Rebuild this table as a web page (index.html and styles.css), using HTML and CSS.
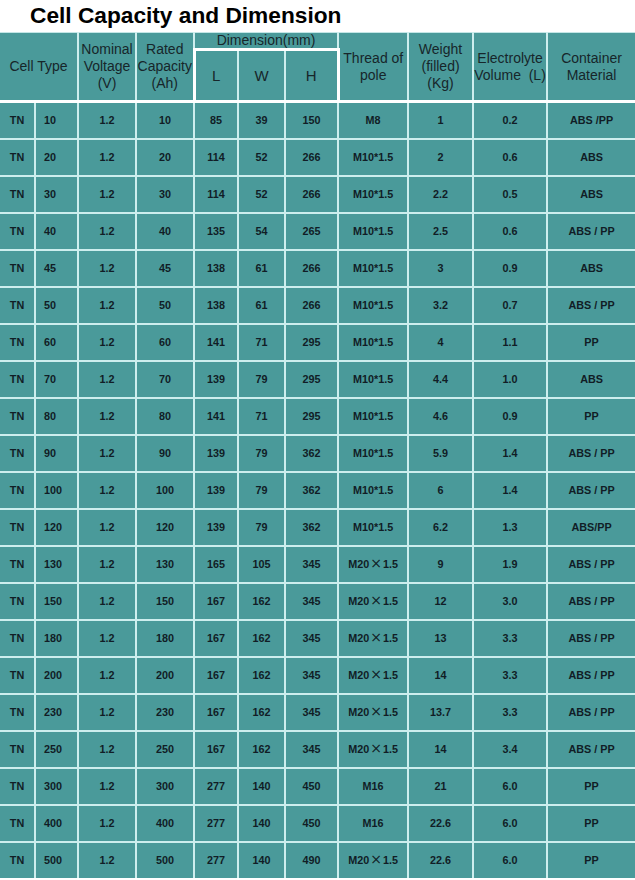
FILE: index.html
```html
<!DOCTYPE html>
<html>
<head>
<meta charset="utf-8">
<link rel="stylesheet" href="styles.css">
</head>
<body>
<h1 class="title">Cell Capacity and Dimension</h1>
<table class="spec">
  <colgroup>
    <col class="c-tn"><col class="c-num"><col class="c-volt"><col class="c-cap">
    <col class="c-l"><col class="c-w"><col class="c-h"><col class="c-thread">
    <col class="c-weight"><col class="c-elec"><col class="c-mat">
  </colgroup>
  <thead>
    <tr class="hr1">
      <th colspan="2" rowspan="2">Cell Type</th>
      <th rowspan="2">Nominal<br>Voltage<br>(V)</th>
      <th rowspan="2">Rated<br>Capacity<br>(Ah)</th>
      <th colspan="3" class="dim">Dimension(mm)</th>
      <th rowspan="2">Thread of<br>pole</th>
      <th rowspan="2">Weight<br>(filled)<br>(Kg)</th>
      <th rowspan="2" class="nowrap">Electrolyte<br>Volume&nbsp;&nbsp;(L)</th>
      <th rowspan="2">Container<br>Material</th>
    </tr>
    <tr class="hr2">
      <th class="sub first">L</th>
      <th class="sub">W</th>
      <th class="sub last">H</th>
    </tr>
  </thead>
  <tbody>
    <tr><td>TN</td><td class="num">10</td><td>1.2</td><td>10</td><td>85</td><td>39</td><td>150</td><td>M8</td><td>1</td><td>0.2</td><td>ABS /PP</td></tr>
    <tr><td>TN</td><td class="num">20</td><td>1.2</td><td>20</td><td>114</td><td>52</td><td>266</td><td>M10*1.5</td><td>2</td><td>0.6</td><td>ABS</td></tr>
    <tr><td>TN</td><td class="num">30</td><td>1.2</td><td>30</td><td>114</td><td>52</td><td>266</td><td>M10*1.5</td><td>2.2</td><td>0.5</td><td>ABS</td></tr>
    <tr><td>TN</td><td class="num">40</td><td>1.2</td><td>40</td><td>135</td><td>54</td><td>265</td><td>M10*1.5</td><td>2.5</td><td>0.6</td><td>ABS / PP</td></tr>
    <tr><td>TN</td><td class="num">45</td><td>1.2</td><td>45</td><td>138</td><td>61</td><td>266</td><td>M10*1.5</td><td>3</td><td>0.9</td><td>ABS</td></tr>
    <tr><td>TN</td><td class="num">50</td><td>1.2</td><td>50</td><td>138</td><td>61</td><td>266</td><td>M10*1.5</td><td>3.2</td><td>0.7</td><td>ABS / PP</td></tr>
    <tr><td>TN</td><td class="num">60</td><td>1.2</td><td>60</td><td>141</td><td>71</td><td>295</td><td>M10*1.5</td><td>4</td><td>1.1</td><td>PP</td></tr>
    <tr><td>TN</td><td class="num">70</td><td>1.2</td><td>70</td><td>139</td><td>79</td><td>295</td><td>M10*1.5</td><td>4.4</td><td>1.0</td><td>ABS</td></tr>
    <tr><td>TN</td><td class="num">80</td><td>1.2</td><td>80</td><td>141</td><td>71</td><td>295</td><td>M10*1.5</td><td>4.6</td><td>0.9</td><td>PP</td></tr>
    <tr><td>TN</td><td class="num">90</td><td>1.2</td><td>90</td><td>139</td><td>79</td><td>362</td><td>M10*1.5</td><td>5.9</td><td>1.4</td><td>ABS / PP</td></tr>
    <tr><td>TN</td><td class="num">100</td><td>1.2</td><td>100</td><td>139</td><td>79</td><td>362</td><td>M10*1.5</td><td>6</td><td>1.4</td><td>ABS / PP</td></tr>
    <tr><td>TN</td><td class="num">120</td><td>1.2</td><td>120</td><td>139</td><td>79</td><td>362</td><td>M10*1.5</td><td>6.2</td><td>1.3</td><td>ABS/PP</td></tr>
    <tr><td>TN</td><td class="num">130</td><td>1.2</td><td>130</td><td>165</td><td>105</td><td>345</td><td>M20<span class="x">×</span>1.5</td><td>9</td><td>1.9</td><td>ABS / PP</td></tr>
    <tr><td>TN</td><td class="num">150</td><td>1.2</td><td>150</td><td>167</td><td>162</td><td>345</td><td>M20<span class="x">×</span>1.5</td><td>12</td><td>3.0</td><td>ABS / PP</td></tr>
    <tr><td>TN</td><td class="num">180</td><td>1.2</td><td>180</td><td>167</td><td>162</td><td>345</td><td>M20<span class="x">×</span>1.5</td><td>13</td><td>3.3</td><td>ABS / PP</td></tr>
    <tr><td>TN</td><td class="num">200</td><td>1.2</td><td>200</td><td>167</td><td>162</td><td>345</td><td>M20<span class="x">×</span>1.5</td><td>14</td><td>3.3</td><td>ABS / PP</td></tr>
    <tr><td>TN</td><td class="num">230</td><td>1.2</td><td>230</td><td>167</td><td>162</td><td>345</td><td>M20<span class="x">×</span>1.5</td><td>13.7</td><td>3.3</td><td>ABS / PP</td></tr>
    <tr><td>TN</td><td class="num">250</td><td>1.2</td><td>250</td><td>167</td><td>162</td><td>345</td><td>M20<span class="x">×</span>1.5</td><td>14</td><td>3.4</td><td>ABS / PP</td></tr>
    <tr><td>TN</td><td class="num">300</td><td>1.2</td><td>300</td><td>277</td><td>140</td><td>450</td><td>M16</td><td>21</td><td>6.0</td><td>PP</td></tr>
    <tr><td>TN</td><td class="num">400</td><td>1.2</td><td>400</td><td>277</td><td>140</td><td>450</td><td>M16</td><td>22.6</td><td>6.0</td><td>PP</td></tr>
    <tr><td>TN</td><td class="num">500</td><td>1.2</td><td>500</td><td>277</td><td>140</td><td>490</td><td>M20<span class="x">×</span>1.5</td><td>22.6</td><td>6.0</td><td>PP</td></tr>
  </tbody>
</table>
</body>
</html>
```

FILE: styles.css
```css
html, body {
  margin: 0;
  padding: 0;
  background: #ffffff;
}

body {
  width: 635px;
  height: 880px;
  overflow: hidden;
  font-family: "Liberation Sans", Arial, sans-serif;
}

.title {
  margin: 0;
  height: 32px;
  padding-left: 30px;
  font-size: 22.7px;
  line-height: 30px;
  font-weight: bold;
  color: #000000;
}

.spec {
  width: 635px;
  table-layout: fixed;
  border-collapse: collapse;
  background: #4a9a9a;
  border-left: hidden;
  border-right: hidden;
  border-bottom: hidden;
  border-top: 1px solid #c4e6e6;
}

.c-tn { width: 35px; }
.c-num { width: 43px; }
.c-volt { width: 58px; }
.c-cap { width: 58px; }
.c-l { width: 44px; }
.c-w { width: 47px; }
.c-h { width: 53px; }
.c-thread { width: 70px; }
.c-weight { width: 65px; }
.c-elec { width: 74px; }
.c-mat { width: 88px; }

.spec th,
.spec td {
  border: 2px solid #cdeeee;
  padding: 0;
  text-align: center;
  vertical-align: middle;
  overflow: visible;
}

.spec th {
  font-weight: normal;
  font-size: 14px;
  line-height: 17px;
  color: #17262a;
  border-bottom: 3px solid #ffffff;
}

.hr1 th {
  border-top: 1px solid #c4e6e6;
}

.hr1 th.dim {
  height: 14px;
  line-height: 15px;
  border-bottom: 3px solid #ffffff;
}

.hr2 th {
  height: 49px;
  font-size: 15px;
}

.hr2 th.first {
  border-left: 3px solid #ffffff;
}

.hr2 th.last {
  border-right: 3px solid #ffffff;
}

.nowrap {
  white-space: nowrap;
}

.spec td {
  height: 35px;
  font-size: 10.8px;
  line-height: 13px;
  font-weight: bold;
  color: #111d26;
}

.spec td.num {
  text-align: left;
  padding-left: 8px;
}

.x {
  font-weight: normal;
  font-size: 14px;
  line-height: 0;
  padding: 0 1px;
  font-family: "DejaVu Sans", sans-serif;
}
```
